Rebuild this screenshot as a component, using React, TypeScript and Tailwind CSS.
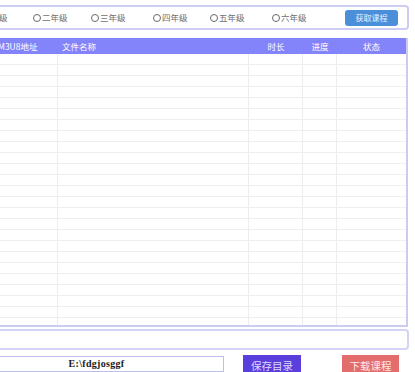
import React from 'react';

const grades = ['一年级', '二年级', '三年级', '四年级', '五年级', '六年级'];
const gradeWidths = ['w-[60px]', 'w-[58px]', 'w-[62px]', 'w-[57px]', 'w-[62px]', 'w-[60px]'];

const columns = [
  { label: 'M3U8地址', cls: 'justify-start pl-[38px]' },
  { label: '文件名称', cls: 'justify-start pl-[4px]' },
  { label: '时长', cls: 'justify-center' },
  { label: '进度', cls: 'justify-center' },
  { label: '状态', cls: 'justify-center' },
];

const rows = Array.from({ length: 25 }, (_, i) => i);

export default function App() {
  return (
    <div
      className="w-[415px] h-[372px] overflow-hidden bg-white"
      style={{ fontFamily: '"Noto Sans CJK SC", "Noto Sans", sans-serif' }}
    >
      <div className="-ml-[40px] w-[449px] flex flex-col">
        {/* Grade selector */}
        <div className="mt-[5px] h-[25px] border-2 border-[#cdcdf3] rounded-[4px] flex items-center pl-[11px] pr-[9px]">
          {grades.map((g, i) => (
            <label key={g} className={`${gradeWidths[i]} flex items-center gap-[1px] shrink-0`}>
              <span className="w-[8px] h-[8px] rounded-full border border-[#6a6a6a] bg-white shrink-0" />
              <span className="text-[8.5px] leading-none text-[#6f6f6f]">{g}</span>
            </label>
          ))}
          <button className="ml-auto w-[53px] h-[16px] rounded-[3px] bg-[#4b8fdb] text-[#e8f1ff] text-[8px] leading-none flex items-center justify-center">
            获取课程
          </button>
        </div>

        {/* Course table */}
        <div className="mt-[8px] w-[448px] border-r-2 border-b-2 border-[#cbcbf2]">
          <div className="grid grid-cols-[98px_191px_54px_34px_69px] h-[16px] bg-[#8484fa] text-white text-[8.5px] leading-none">
            {columns.map((c) => (
              <div key={c.label} className={`flex items-center ${c.cls}`}>
                {c.label}
              </div>
            ))}
          </div>
          <div className="h-[271px] overflow-hidden">
            {rows.map((r) => (
              <div
                key={r}
                className="grid grid-cols-[98px_191px_54px_34px_69px] h-[11px] border-b border-[#efeff3]"
              >
                <div className="border-r border-[#ebebf0]" />
                <div className="border-r border-[#ebebf0]" />
                <div className="border-r border-[#ebebf0]" />
                <div className="border-r border-[#ebebf0]" />
                <div />
              </div>
            ))}
          </div>
        </div>

        {/* Log box */}
        <div className="mt-[2px] h-[21px] border-2 border-[#d3d3f5] rounded-[4px]" />

        {/* Save path + actions */}
        <div className="mt-[5px] flex items-start">
          <div className="ml-[9px] w-[255px] h-[16px] mt-[1px] border border-[#bdbdee] flex items-center justify-center">
            <span
              className="text-[10px] leading-none font-semibold text-[#1a1a1a] tracking-[0.3px]"
              style={{ fontFamily: '"Liberation Serif", serif' }}
            >
              E:\fdgjosggf
            </span>
          </div>
          <button className="ml-[19px] w-[58px] h-[22px] bg-[#5a3fdc] text-[#dcd8ff] text-[10.5px] leading-none flex items-center justify-center">
            保存目录
          </button>
          <button className="ml-[41px] w-[57px] h-[22px] bg-[#e36c6c] text-[#fde8e8] text-[10.5px] leading-none flex items-center justify-center">
            下载课程
          </button>
        </div>
      </div>
    </div>
  );
}
